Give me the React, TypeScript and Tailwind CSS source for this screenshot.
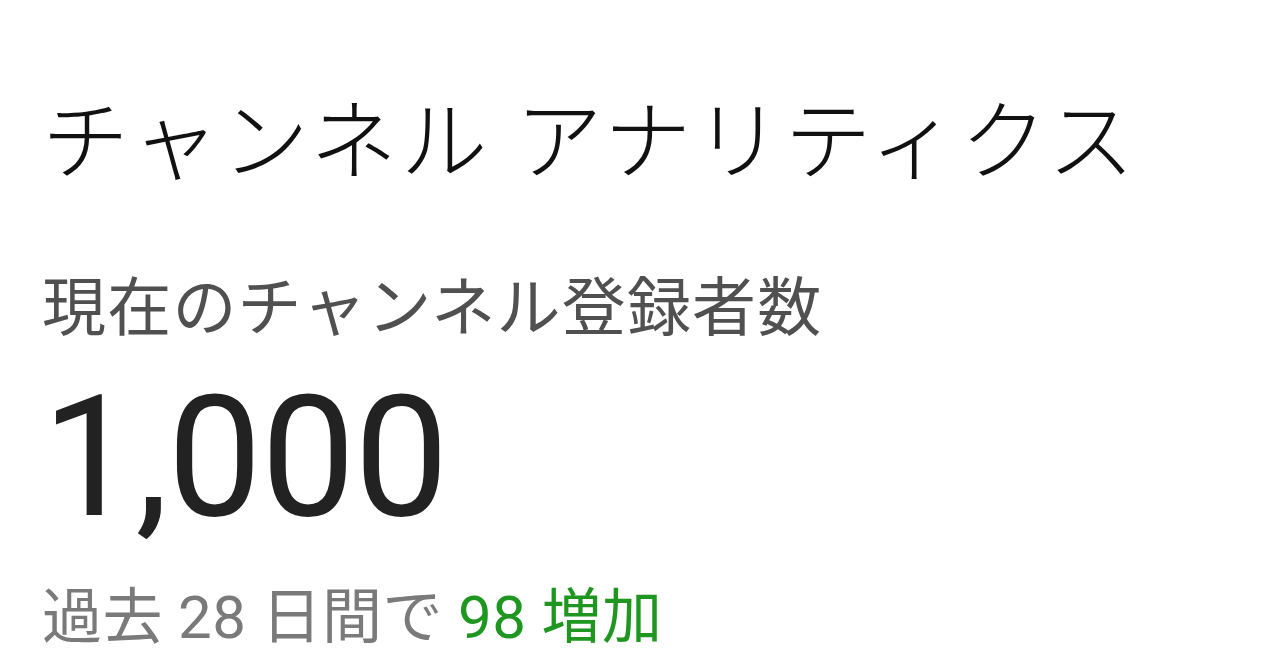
export default function App() {
  return (
    <div className="min-h-[669px] bg-white px-[42px] pt-[100px] font-['Roboto','Noto_Sans_CJK_JP',sans-serif]">
      <h1 className="text-[87px] leading-[87px] font-light tracking-[3.3px] text-[#111111]">チャンネル アナリティクス</h1>
      <p className="mt-[90px] text-[64px] leading-[64px] tracking-[1.2px] text-[#505050]">現在のチャンネル登録者数</p>
      <p className="mt-[33px] text-[168px] leading-[168px] tracking-[-1px] text-[#222222]">1,000</p>
      <p className="mt-[46px] text-[60px] leading-[60px] tracking-[0.4px] text-[#7a7a7a]">
        過去 28 日間で <span className="text-[#1f961f]">98 増加</span>
      </p>
    </div>
  )
}
